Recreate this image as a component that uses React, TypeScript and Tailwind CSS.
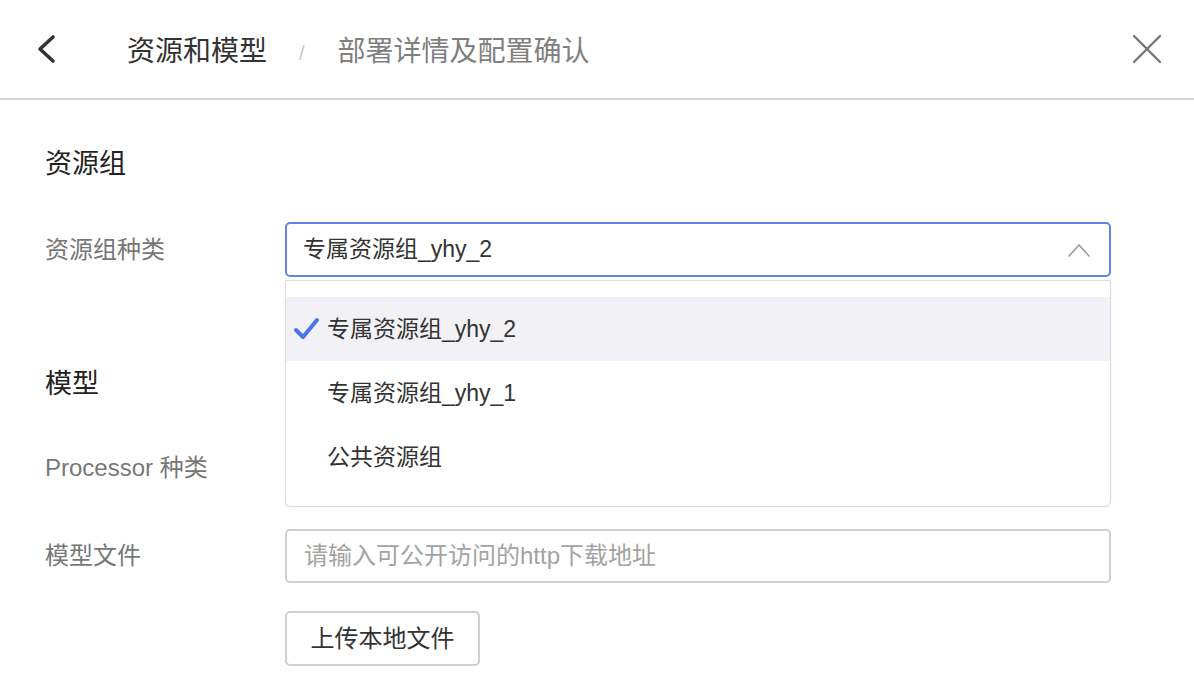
const font = { fontFamily: '"Liberation Sans", "Noto Sans CJK SC", sans-serif' };

const options = ['专属资源组_yhy_2', '专属资源组_yhy_1', '公共资源组'];

function Label({ children }: { children: React.ReactNode }) {
  return <div className="w-[240px] shrink-0 text-[24px] text-[#777]">{children}</div>;
}

export default function App() {
  const selected = options[0];

  return (
    <div className="min-h-screen w-full bg-white" style={font}>
      {/* Header */}
      <div className="flex h-[100px] items-center border-b-2 border-[#d8d8d8] pl-[35px] pr-[32px]">
        <svg className="h-[30px] w-[22px]" viewBox="0 0 22 30" fill="none">
          <path d="M18 3 L5 15 L18 27" stroke="#333" strokeWidth="3.6" strokeLinecap="round" strokeLinejoin="round" />
        </svg>
        <span className="ml-[70px] pt-[6px] text-[28px] text-[#333]">资源和模型</span>
        <span className="ml-[32px] pt-[8px] text-[20px] text-[#c8c8c8]">/</span>
        <span className="ml-[33px] pt-[6px] text-[28px] text-[#808080]">部署详情及配置确认</span>
        <svg className="ml-auto h-[30px] w-[30px]" viewBox="0 0 30 30" fill="none">
          <path d="M2 2 L28 28 M28 2 L2 28" stroke="#777" strokeWidth="2.4" strokeLinecap="round" />
        </svg>
      </div>

      {/* Content */}
      <div className="pl-[45px] pr-[83px]">
        <div className="pt-[47px] text-[27px] leading-[34px] text-[#222]">资源组</div>

        <div className="relative mt-[41px] flex items-center">
          <Label>资源组种类</Label>
          <div className="relative flex-1">
            <div className="flex h-[55px] items-center rounded-[5px] border-2 border-[#6283e4] pl-[16px] pr-[18px]">
              <span className="text-[23px] text-[#333]">{selected}</span>
              <svg className="ml-auto h-[16px] w-[24px]" viewBox="0 0 24 16" fill="none">
                <path d="M2 14 L12 3 L22 14" stroke="#999" strokeWidth="1.6" strokeLinecap="round" strokeLinejoin="round" />
              </svg>
            </div>
            {/* Dropdown */}
            <div className="absolute left-0 right-0 top-[58px] z-10 rounded-b-[6px] border border-[#dcdce2] bg-white pb-[17px] pt-[16px] shadow-[0_1px_3px_rgba(0,0,0,0.06)]">
              {options.map((opt) => (
                <div
                  key={opt}
                  className={`flex h-[64px] items-center ${opt === selected ? 'bg-[#f2f2f6]' : ''}`}
                >
                  <span className="flex w-[41px] justify-end pr-[7px]">
                    {opt === selected && (
                      <svg className="h-[24px] w-[27px]" viewBox="0 0 27 24" fill="none">
                        <path d="M3 13 L10 20 L24 3" stroke="#4a74e8" strokeWidth="4" strokeLinecap="round" strokeLinejoin="round" />
                      </svg>
                    )}
                  </span>
                  <span className="text-[23px] text-[#333]">{opt}</span>
                </div>
              ))}
            </div>
          </div>
        </div>

        <div className="mt-[90px] text-[27px] leading-[34px] text-[#222]">模型</div>

        <div className="mt-[39px] flex items-center">
          <Label>Processor 种类</Label>
          <div className="flex h-[55px] flex-1 items-center rounded-[5px] border-2 border-[#d0d0d4]" />
        </div>

        <div className="mt-[34px] flex items-center">
          <Label>模型文件</Label>
          <div className="flex h-[54px] flex-1 items-center rounded-[5px] border-2 border-[#cfcfd3] pl-[17px]">
            <span className="text-[24px] text-[#a3a3a3]">请输入可公开访问的http下载地址</span>
          </div>
        </div>

        <div className="mt-[28px] pl-[240px]">
          <button className="flex h-[55px] w-[195px] items-center justify-center rounded-[5px] border-2 border-[#cfcfd3] bg-white text-[24px] text-[#333]">
            上传本地文件
          </button>
        </div>
      </div>
    </div>
  );
}
